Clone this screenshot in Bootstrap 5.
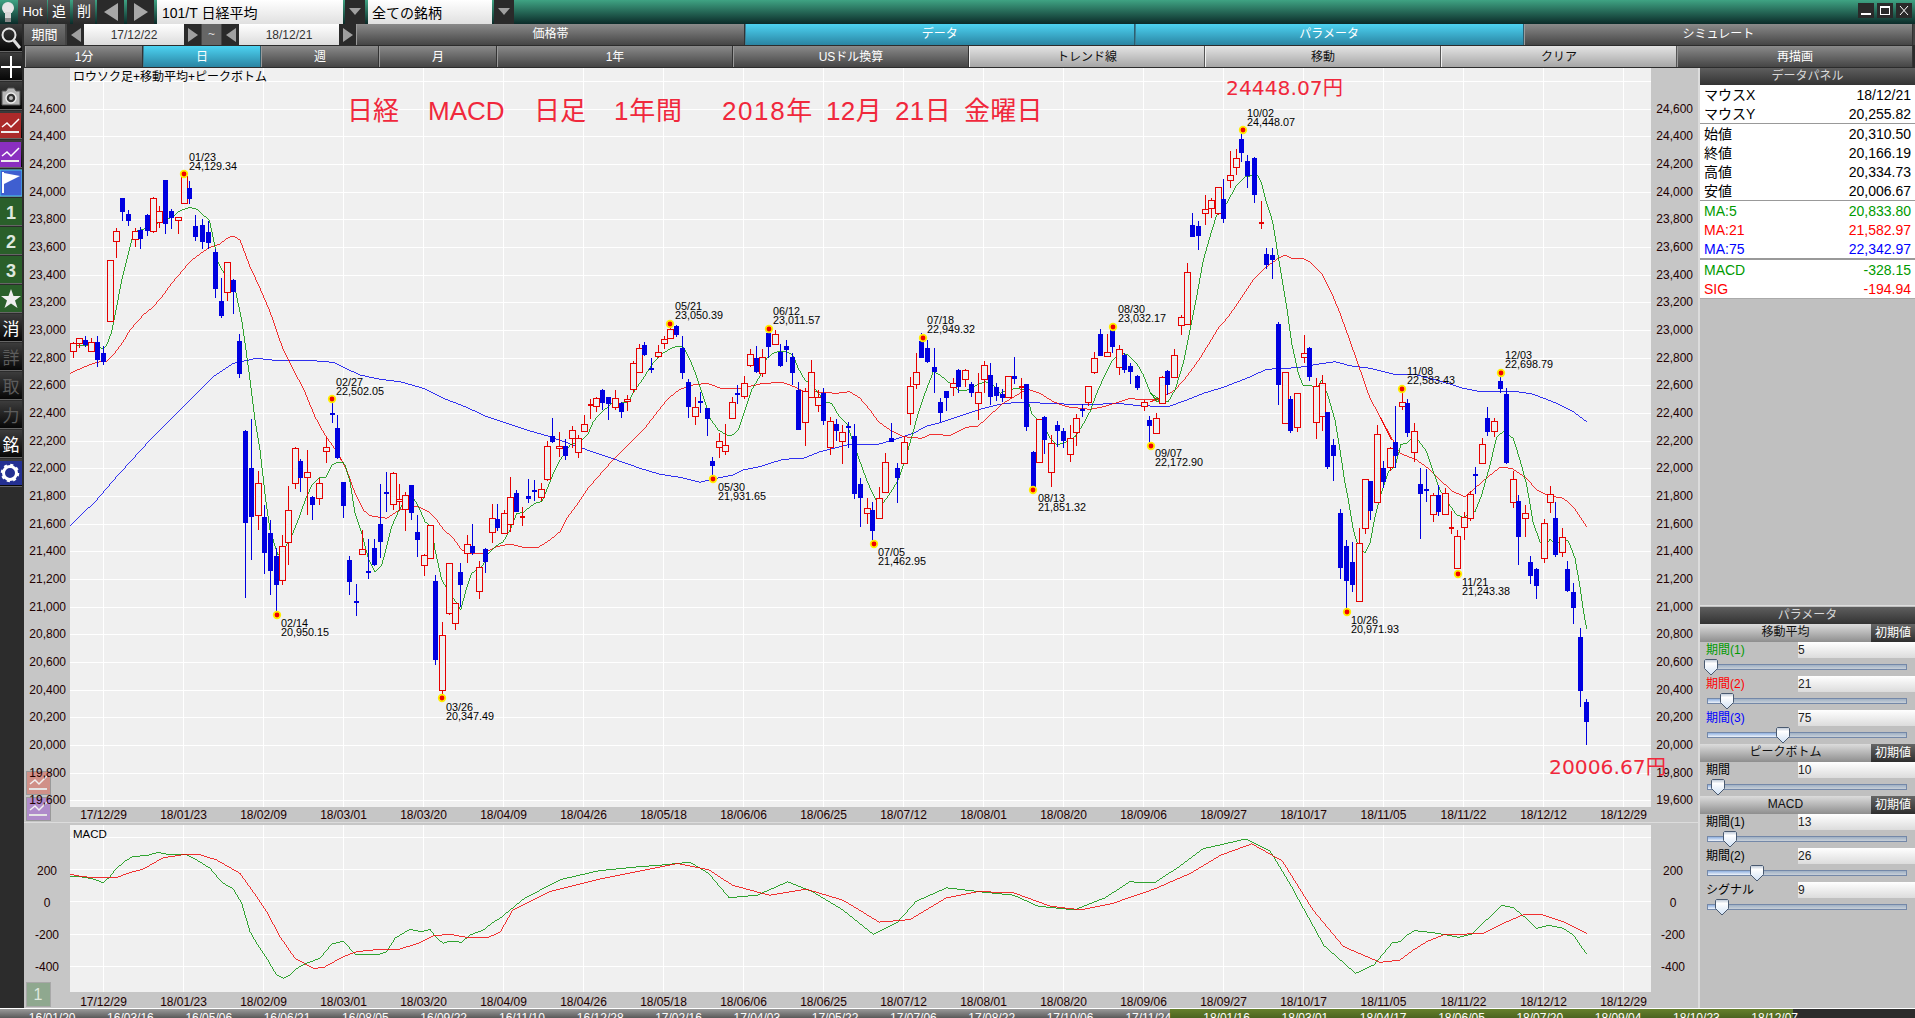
<!DOCTYPE html>
<html lang="ja">
<head>
<meta charset="utf-8">
<title>日経 MACD</title>
<link href="https://cdn.jsdelivr.net/npm/bootstrap@5.3.0/dist/css/bootstrap.min.css" rel="stylesheet">
<style>
html,body{margin:0;width:1915px;height:1018px;overflow:hidden;background:#2c2c2c}
body{font-family:"Liberation Sans","Noto Sans CJK JP",sans-serif;font-size:12px;line-height:1.1;color:#000}
.tbar{height:24px;background:linear-gradient(#3fa383,#0b2b29);flex:none}
.xb{display:flex;align-items:center;justify-content:center;font-size:12px;color:#fff;padding:0;border:0;border-radius:0;background:linear-gradient(#8a8a8a,#454545);box-shadow:inset 1px 0 0 #9a9a9a,inset -1px 0 0 #333;white-space:nowrap}
.xb.on{background:linear-gradient(#4dd3f2,#2a84a2);box-shadow:inset 1px 0 0 #3b7f95,inset -1px 0 0 #2c5f70}
.xb.lite{background:linear-gradient(#e4e4e4,#a6a6a6);color:#111;box-shadow:inset 1px 0 0 #f2f2f2,inset -1px 0 0 #555}
.bulb{width:16px;margin-right:2px}
.t-hot{width:29px;font-size:13px;background:linear-gradient(#555,#2a2a2a);margin-right:1px;box-shadow:none}
.t-k{width:22px;font-size:14px;background:linear-gradient(#555,#2a2a2a);margin-right:3px;box-shadow:none}
.t-k2{margin-right:2px}
.t-arr{width:27px;margin-right:3px;background:#2a2a2a;box-shadow:none}
.t-drop{width:20px;background:#2a2a2a;box-shadow:none}
.inp1{height:24px;border:0;border-radius:0;padding:0 0 0 5px;font-size:14px;background:linear-gradient(#fff,#e0e0e0);color:#000;line-height:22px}
.inp-a{width:186px;margin:0 2px 0 0}
.inp-b{width:124px;margin:0 2px 0 3px;padding-left:4px}
.winb{width:16px;height:15px;background:#2a2a2a;margin:3px 3px 0 0;display:flex;align-items:center;justify-content:center}
.mainrow{height:984px;flex:none}
.sidebar{width:24px;flex:none;background:#2c2c2c}
.sbtn{width:22px;height:28px;margin-bottom:1px;display:flex;align-items:center;justify-content:center;padding:0;border:0;border-radius:0;background:linear-gradient(#3c3c3c,#050505);box-shadow:inset 0 -1px 0 #666}
.sbtn svg{display:block}
.sbtn .kj{font-size:17px;color:#fff;font-family:"Noto Sans CJK JP",sans-serif}
.sbtn .kj.dim{color:#5c5c5c}
.workarea{width:1891px;flex:none}
.row2{height:21px;margin-bottom:1px;flex:none;background:#444}
.row2 .g1{padding-top:1px}
.row3{height:21px;margin:0 2px 1px 1px;flex:none;background:#444}
.row3 .xb{padding-top:2px}
.c-lbl{width:41px;margin-right:2px;background:linear-gradient(#707070,#505050);font-size:13px;box-shadow:none;padding-top:1px}
.c-arr{width:17px;background:#2a2a2a;box-shadow:none}
.c-tilde{width:19px;margin:0 1px;background:#666;box-shadow:none;color:#ddd}
.date-in{width:100px;height:21px;border:0;border-radius:0;padding:1px 0 0;text-align:center;font-size:12px;color:#333;background:linear-gradient(#fff,#dcdcdc)}
.tabs{margin-right:2px}
.g1{flex:1 1 0}
.g2{flex:2 1 0}
.chartarea{height:940px;flex:none}
.chartcol{width:1674px;flex:none;background:#c6c6c6}
.chartcol svg{display:block}
.sepv{width:2px;flex:none;background:#dcdcdc}
.panel{width:215px;flex:none;background:#c0c0c0}
.ph{height:17px;background:linear-gradient(#5e5e5e,#333);color:#d8d8d8;text-align:center;line-height:17px;font-size:12px;flex:none}
.dp{background:#fff;font-size:14px;flex:none;box-shadow:0 1px 0 #aaa}
.dp .ln{height:19px;padding:0 4px;line-height:20px;white-space:nowrap}
.dp .ln.thin{height:20px;border-bottom:1px solid #999}
.dp .ln.thick{height:21px;border-bottom:2px solid #999}
.c-g{color:#009a00}.c-r{color:#f00}.c-b{color:#00f}
.params{margin-top:auto;height:403px;border-top:1px solid #dedede;padding-top:1px}
.sh{height:18px;background:linear-gradient(#dcdcdc,#8e8e8e);text-align:center;font-size:12px;line-height:17px;flex:none;color:#111}
.reset{width:44px;flex:none;background:linear-gradient(#666,#2e2e2e);color:#fff;font-size:12px;padding:0;border:0;border-radius:0}
.pr{height:34px;position:relative;flex:none}
.pr-top{height:16px}
.pl{width:98px;padding-left:6px;font-size:12px;line-height:17px;white-space:nowrap;flex:none}
.pv{flex:1 1 auto;height:16px;border:0;border-radius:0;padding:0;font-size:12px;line-height:16px;background:linear-gradient(#fff,#dcdcdc);color:#222}
.trk{position:absolute;left:7px;top:22px;width:200px;height:6px;border:1px solid #7488a8;background:linear-gradient(#9fb0c4,#c9d0d8)}
.trk-fill{height:100%;background:linear-gradient(#8fb0e0,#f0f4fa)}
.thumb{position:absolute;top:-6px;width:14px;height:17px}
.tline{height:10px;flex:none;position:relative;overflow:hidden;border-top:1px solid #fff;width:1915px}
.seg-a{width:1170px;background:linear-gradient(#9a9a9a,#5a5a5a)}
.seg-b{width:623px;background:linear-gradient(#66802c,#4c6420)}
.seg-c{flex:1 1 auto;background:#2c2c2c}
.tl-labels{position:absolute;left:13px;top:3px;color:#fff;font-size:12px}
.tl-item{width:78.3px;text-align:center;flex:none;border-left:0}
svg text{font-family:"Liberation Sans","Noto Sans CJK JP",sans-serif}
</style>
</head>
<body class="d-flex flex-column">
<header class="tbar d-flex">
  <div class="bulb d-flex justify-content-center"><svg width="14" height="24" viewBox="0 0 14 24"><circle cx="7" cy="8" r="6" fill="#e6e6e6"/><rect x="4" y="12" width="6" height="6" fill="#d8d8d8"/><rect x="4" y="18" width="6" height="4" fill="#888"/></svg></div>
  <button class="xb t-hot">Hot</button>
  <button class="xb t-k">追</button>
  <button class="xb t-k t-k2">削</button>
  <button class="xb t-arr"><svg width="16" height="18" viewBox="0 0 16 18"><polygon points="15,0 15,18 1,9" fill="#a8a8a8"/></svg></button>
  <button class="xb t-arr"><svg width="16" height="18" viewBox="0 0 16 18"><polygon points="1,0 1,18 15,9" fill="#a8a8a8"/></svg></button>
  <input class="form-control inp1 inp-a" value="101/T 日経平均">
  <button class="xb t-drop"><svg width="12" height="8" viewBox="0 0 12 8"><polygon points="0,0 12,0 6,7" fill="#a0a0a0"/></svg></button>
  <input class="form-control inp1 inp-b" value="全ての銘柄">
  <button class="xb t-drop"><svg width="12" height="8" viewBox="0 0 12 8"><polygon points="0,0 12,0 6,7" fill="#a0a0a0"/></svg></button>
  <div class="ms-auto d-flex">
    <div class="winb"><svg width="12" height="11" viewBox="0 0 12 11"><rect x="1" y="8" width="10" height="2" fill="#fff"/></svg></div>
    <div class="winb"><svg width="12" height="11" viewBox="0 0 12 11"><rect x="1.5" y="1.5" width="9" height="8" fill="none" stroke="#fff"/><rect x="1" y="1" width="10" height="2" fill="#fff"/></svg></div>
    <div class="winb"><svg width="12" height="11" viewBox="0 0 12 11"><path d="M2 1 L10 10 M10 1 L2 10" stroke="#fff" fill="none"/></svg></div>
  </div>
</header>

<div class="d-flex mainrow">
  <aside class="sidebar d-flex flex-column">
    <button class="sbtn"><svg width="22" height="28" viewBox="0 0 22 28"><circle cx="9" cy="11" r="6.5" fill="none" stroke="#e4e4e4" stroke-width="2"/><line x1="13.5" y1="16" x2="20" y2="24" stroke="#dcdcdc" stroke-width="3"/></svg></button>
    <button class="sbtn"><svg width="22" height="28" viewBox="0 0 22 28"><path d="M11 3V25M1 14H21" stroke="#fff" stroke-width="2" fill="none"/></svg></button>
    <button class="sbtn"><svg width="22" height="28" viewBox="0 0 22 28"><path d="M2 9H6L8 6H14L16 9H20V23H2Z" fill="#b5b5b5" stroke="#555"/><circle cx="11" cy="16" r="5" fill="#333" stroke="#eee" stroke-width="1.5"/><circle cx="11" cy="16" r="2" fill="#bbb"/></svg></button>
    <button class="sbtn"><svg width="22" height="28" viewBox="0 0 22 28"><rect x="0" y="2" width="21" height="25" fill="#ab2a2a"/><path d="M2 16 L7 12 L11 16 L19 8" stroke="#fff" stroke-width="1.5" fill="none"/><path d="M1 21H19" stroke="#eee" stroke-width="2"/></svg></button>
    <button class="sbtn"><svg width="22" height="28" viewBox="0 0 22 28"><rect x="0" y="2" width="21" height="25" fill="#8a2fc0"/><path d="M2 16 L7 12 L11 16 L19 8" stroke="#fff" stroke-width="1.5" fill="none"/><path d="M1 21H19" stroke="#eee" stroke-width="2"/></svg></button>
    <button class="sbtn"><svg width="22" height="28" viewBox="0 0 22 28"><rect x="0" y="1" width="22" height="26" fill="#3f5fd0" stroke="#48c8e8"/><path d="M3 3V24" stroke="#fff" stroke-width="2"/><path d="M4 4 L20 7 L4 15Z" fill="#fff"/></svg></button>
    <button class="sbtn"><svg width="22" height="28" viewBox="0 0 22 28"><rect width="22" height="27" fill="#2a5f2a"/><text x="11" y="21" text-anchor="middle" font-size="18" font-weight="700" fill="#dfe8df">1</text></svg></button>
    <button class="sbtn"><svg width="22" height="28" viewBox="0 0 22 28"><rect width="22" height="27" fill="#2a5f2a"/><text x="11" y="21" text-anchor="middle" font-size="18" font-weight="700" fill="#dfe8df">2</text></svg></button>
    <button class="sbtn"><svg width="22" height="28" viewBox="0 0 22 28"><rect width="22" height="27" fill="#2a5f2a"/><text x="11" y="21" text-anchor="middle" font-size="18" font-weight="700" fill="#dfe8df">3</text></svg></button>
    <button class="sbtn"><svg width="22" height="28" viewBox="0 0 22 28"><rect width="22" height="27" fill="#2a5f2a"/><polygon points="11,4 13.5,11 21,11 15,15.5 17.5,23 11,18.5 4.5,23 7,15.5 1,11 8.500,11" fill="#eee"/></svg></button>
    <button class="sbtn"><span class="kj">消</span></button>
    <button class="sbtn"><span class="kj dim">詳</span></button>
    <button class="sbtn"><span class="kj dim">取</span></button>
    <button class="sbtn"><span class="kj dim">力</span></button>
    <button class="sbtn"><span class="kj">銘</span></button>
    <button class="sbtn"><svg width="22" height="28" viewBox="0 0 22 28"><rect y="2" width="22" height="24" fill="#243092"/><circle cx="10" cy="14" r="6.5" fill="none" stroke="#fff" stroke-width="3"/><circle cx="10" cy="14" r="8" fill="none" stroke="#fff" stroke-width="2.500" stroke-dasharray="3 3.280"/></svg></button>
  </aside>

  <div class="workarea d-flex flex-column">
    <div class="row2 d-flex">
      <div class="xb c-lbl">期間</div>
      <button class="xb c-arr"><svg width="12" height="14" viewBox="0 0 12 14"><polygon points="11,0 11,14 1,7" fill="#a0a0a0"/></svg></button>
      <input class="form-control date-in" value="17/12/22">
      <button class="xb c-arr"><svg width="12" height="14" viewBox="0 0 12 14"><polygon points="1,0 1,14 11,7" fill="#a0a0a0"/></svg></button>
      <div class="xb c-tilde">~</div>
      <button class="xb c-arr"><svg width="12" height="14" viewBox="0 0 12 14"><polygon points="11,0 11,14 1,7" fill="#a0a0a0"/></svg></button>
      <input class="form-control date-in" value="18/12/21">
      <button class="xb c-arr"><svg width="12" height="14" viewBox="0 0 12 14"><polygon points="1,0 1,14 11,7" fill="#a0a0a0"/></svg></button>
      <div class="d-flex flex-fill tabs">
        <button class="xb g1">価格帯</button>
        <button class="xb g1 on">データ</button>
        <button class="xb g1 on">パラメータ</button>
        <button class="xb g1">シミュレート</button>
      </div>
    </div>
    <div class="row3 d-flex">
      <button class="xb g1">1分</button>
      <button class="xb g1 on">日</button>
      <button class="xb g1">週</button>
      <button class="xb g1">月</button>
      <button class="xb g2">1年</button>
      <button class="xb g2">USドル換算</button>
      <button class="xb g2 lite">トレンド線</button>
      <button class="xb g2 lite">移動</button>
      <button class="xb g2 lite">クリア</button>
      <button class="xb g2">再描画</button>
    </div>
    <div class="d-flex chartarea">
      <div class="chartcol">
        <svg id="sp" width="1674" height="755" viewBox="24 68 1674 755"></svg>
        <svg id="sm" width="1674" height="185" viewBox="24 823 1674 185"></svg>
      </div>
      <div class="sepv"></div>
      <div class="panel d-flex flex-column">
        <div class="ph">データパネル</div>
        <div class="dp">
          <div class="ln d-flex justify-content-between"><span>マウスX</span><span>18/12/21</span></div>
          <div class="ln thin d-flex justify-content-between"><span>マウスY</span><span>20,255.82</span></div>
          <div class="ln d-flex justify-content-between"><span>始値</span><span>20,310.50</span></div>
          <div class="ln d-flex justify-content-between"><span>終値</span><span>20,166.19</span></div>
          <div class="ln d-flex justify-content-between"><span>高値</span><span>20,334.73</span></div>
          <div class="ln thin d-flex justify-content-between"><span>安値</span><span>20,006.67</span></div>
          <div class="ln c-g d-flex justify-content-between"><span>MA:5</span><span>20,833.80</span></div>
          <div class="ln c-r d-flex justify-content-between"><span>MA:21</span><span>21,582.97</span></div>
          <div class="ln thick c-b d-flex justify-content-between"><span>MA:75</span><span>22,342.97</span></div>
          <div class="ln c-g d-flex justify-content-between"><span>MACD</span><span>-328.15</span></div>
          <div class="ln c-r d-flex justify-content-between"><span>SIG</span><span>-194.94</span></div>
        </div>
        <div class="params d-flex flex-column" id="params"></div>
      </div>
    </div>
  </div>
</div>

<footer class="tline d-flex">
  <div class="seg-a"></div><div class="seg-b"></div><div class="seg-c"></div>
  <div class="tl-labels d-flex" id="tl"></div>
</footer>

<script src="https://cdn.jsdelivr.net/npm/bootstrap@5.3.0/dist/js/bootstrap.bundle.min.js"></script>
<script>
// Candles: crop-relative readings  [colour, x, wickTop, bodyTop, bodyBottom, wickBottom]
var C=[];
function add(X,Y,s,l){l.forEach(function(a){C.push([a[0],X+a[1]/s,Y+a[2]/s,Y+a[3]/s,Y+a[4]/s,Y+a[5]/s])})}
add(0,160,3,[['r',219,545,550,572,593],['r',238,533,535,548,565],['b',256,528,540,555,560],['r',274,535,547,572,572],['b',292,528,547,600,620],['b',310,558,580,607,615],['r',330,300,300,482,482],['r',348,205,214,244,294],['b',367,114,114,155,183],['b',385,150,162,183,198],['r',404,205,214,238,260],['b',421,200,210,237,267],['b',440,163,165,212,228],['r',458,110,115,212,218],['r',477,138,152,186,205],['b',496,59,60,192,222],['b',514,148,154,175,207],['r',533,170,172,179,222],['r',552,40,47,128,131],['b',568,63,84,117,132],['b',586,165,198,231,242],['b',606,177,195,246,267],['b',625,183,216,248,267],['b',644,268,276,387,413],['b',662,354,423,468,473],['r',681,305,307,397,422],['b',698,358,361,396,462],['b',716,522,543,641,654]]);
add(0,0,1,[['b',245,430,431,523,598],['b',251,419,468,517,560],['r',258,471,483,515,530],['b',264,505,517,553,574],['b',270,520,533,571,595],['b',276,548,556,585,615],['r',282,535,546,580,585],['r',288,486,510,542,565],['r',295,447,448,483,489],['b',300,459,461,478,492],['r',307,450,472,477,515],['b',312,496,497,505,520],['r',319,478,483,498,505],['r',326,437,447,451,463],['b',332,402,413,415,423],['b',337,415,428,458,459],['r',442,622,635,690,698],['b',435,575,581,660,665]]);
add(340,290,3,[['b',10,576,576,648,684],['b',28,798,810,876,915],['b',47,882,932,932,977],['r',66,720,778,791,795],['b',85,747,843,843,866],['b',103,747,775,826,828],['b',121,582,702,755,804],['b',139,546,607,607,665],['r',159,546,550,643,660],['r',176,582,628,634,662],['r',196,606,616,658,722],['b',214,585,585,668,690],['b',232,675,726,749,800],['r',252,792,794,826,857],['r',270,705,706,805,805],['r',327,820,820,968,975],['r',345,938,938,998,1020],['b',361,820,847,885,950],['r',380,735,763,788,820],['b',397,702,768,790,795],['r',416,812,830,904,928],['b',434,775,778,815,850],['r',456,642,683,727,758],['b',472,642,688,713,722],['r',491,660,670,730,733],['r',510,561,622,703,725],['b',527,600,609,665,666],['r',546,650,677,677,707],['b',565,568,619,627,640],['b',583,570,601,601,632],['r',602,578,598,620,632],['r',621,453,469,568,572],['b',637,384,439,456,460],['r',657,427,469,475,502],['b',675,447,468,498,510],['r',696,408,421,443,473],['r',714,435,445,487,503],['r',732,375,403,422,425],['r',750,327,342,342,387],['r',768,320,325,347,366],['b',785,296,300,338,360],['b',804,321,321,343,390],['r',825,300,325,352,360],['b',842,335,340,365,383],['r',861,315,327,334,363],['r',879,213,220,298,308],['r',897,163,175,245,250],['b',913,155,165,195,198],['b',934,205,233,233,248],['r',954,165,187,197,205],['r',972,138,148,160,176],['r',990,100,118,145,147],['b',1007,105,108,134,140],['b',1025,138,174,248,267],['b',1044,268,277,352,384],['r',1065,322,350,379,405],['b',1081,306,333,333,368],['b',1100,353,355,386,438],['b',1117,500,513,527,566],['r',1137,430,452,470,505],['r',1155,403,466,484,495],['r',1176,322,337,385,388],['b',1192,285,308,308,342],['r',1212,258,278,319,328],['r',1230,178,193,226,232],['b',1247,168,204,245,250]]);
add(750,290,3,[['r',36,177,202,250,260],['b',55,130,130,170,205],['r',75,120,133,163,165],['b',91,163,186,227,230],['b',109,150,168,180,215],['b',127,190,200,250,285],['b',145,277,300,420,420],['r',164,295,303,395,467],['r',184,210,247,320,325],['r',203,300,322,346,365],['b',220,295,309,392,405],['r',239,380,394,470,495],['b',257,388,403,422,452],['r',276,405,425,454,522],['b',295,395,408,408,475],['b',313,403,438,612,628],['b',331,565,582,625,712],['r',350,625,653,670,702],['b',367,635,660,723,760],['r',387,592,625,683,683],['r',405,490,515,605,608],['b',423,400,445,455,455],['b',442,518,535,564,640],['r',462,440,457,520,522],['r',480,262,289,370,405],['r',498,190,247,283,298],['b',514,130,154,204,205],['b',532,150,175,217,220],['b',553,175,231,245,310],['b',571,323,337,368,395],['b',589,305,304,323,362],['r',608,265,280,290,318],['b',625,238,240,290,308],['r',645,238,241,268,290],['b',663,275,281,308,322],['r',684,250,307,340,390],['r',702,213,226,268,308],['b',719,218,255,320,345],['b',737,280,292,317,333],['b',755,298,312,323,335],['r',774,258,259,320,323],['b',793,200,258,266,282],['r',812,263,288,288,328],['b',829,283,283,410,422],['b',848,483,486,592,598],['r',867,388,388,515,515],['b',883,378,380,450,492],['r',903,435,458,545,590],['b',922,392,404,423,470],['b',940,415,424,453,475],['r',960,405,445,491,515],['r',978,372,385,425,468],['b',995,343,358,358,382],['r',1014,288,287,335,348],['r',1033,185,205,247,252],['b',1051,118,133,198,198],['r',1070,132,185,197,198],['b',1087,110,115,172,190],['r',1106,165,176,232,255],['b',1123,190,196,240,250],['b',1141,220,228,245,282],['b',1162,255,259,293,300],['r',1182,330,335,348,362],['b',1198,378,391,407,458],['r',1218,370,383,430,430],['r',1237,258,260,340,340],['b',1252,240,243,285,316]]);
add(1150,100,3,[['r',73,747,766,832,835],['r',92,645,652,675,705],['r',110,490,517,673,675],['b',127,338,375,410,410],['b',145,363,378,407,450],['r',164,285,328,338,375],['r',183,295,301,325,353],['r',204,260,262,340,345],['b',220,238,297,356,368],['r',240,153,226,241,265],['r',258,148,173,202,225],['b',274,100,118,160,185],['b',292,165,184,227,263],['b',312,172,174,285,308],['r',332,303,366,366,387],['b',349,444,462,494,507],['b',367,444,465,480,536],['b',385,665,672,856,914],['r',405,815,817,970,970],['b',421,888,897,992,998],['r',442,878,878,982,995],['r',461,705,758,772,788],['b',478,742,744,830,842]]);
add(1300,400,3,[['r',47,-66,-42,65,118],['r',66,-76,-50,48,92],['b',82,35,37,200,208],['b',100,118,135,167,242],['b',120,328,340,505,537],['b',138,420,438,542,625],['b',157,427,487,556,575],['r',177,385,430,603,605],['r',194,238,238,385,402],['b',211,243,243,332,360],['r',232,75,103,305,305],['b',250,183,205,245,265],['r',269,140,145,200,212],['b',286,18,127,167,205],['r',305,-24,6,18,30],['b',322,-3,9,100,111],['r',342,70,93,155,187],['b',361,205,252,282,418],['b',379,207,268,268,305],['r',398,280,285,343,365],['b',414,255,285,335,347],['r',434,265,280,342,343],['r',453,333,380,380,402],['r',472,390,408,503,505],['r',491,335,352,380,420],['r',510,272,283,353,362],['b',526,200,221,221,282],['r',545,113,133,190,190],['b',562,20,55,95,108],['r',582,55,62,92,110],['b',600,-72,-57,-33,-21],['b',618,-36,-18,188,192],['r',639,212,238,307,325],['b',655,285,303,410,495],['r',675,315,340,355,410],['b',691,468,487,527,552],['b',709,505,507,557,597],['r',731,358,370,475,488],['r',750,258,283,307,340],['b',766,305,355,465,472],['r',785,385,412,457,470],['b',802,483,507,572,577],['b',820,550,576,623,672],['b',840,685,712,873,920],['b',859,897,906,965,1035]]);

function pts(X,Y,s,l){return l.map(function(p){return [X+p[0]/s,Y+p[1]/s]})}
var green=[].concat(
 pts(0,160,3,[[210,572],[219,560],[240,555],[275,555],[292,558],[310,567],[320,555],[335,515],[350,440],[365,360],[380,300],[395,240],[410,212],[440,205],[470,190],[490,183],[515,172],[540,152],[570,142],[590,148],[610,165],[628,180],[640,235],[655,310],[670,335],[690,362],[708,400],[725,480],[745,620],[765,780],[780,870],[797,1020]]),
 [[270,530],[278,555],[285,548],[292,535],[300,515],[306,498],[312,485],[320,477],[326,477],[332,465],[338,462],[343,462]],
 pts(340,290,3,[[15,525],[30,575],[45,670],[65,730],[85,805],[105,845],[125,825],[140,770],[155,710],[175,665],[195,630],[220,622],[240,660],[255,695],[275,710],[285,780],[305,870],[330,910],[350,940],[362,960],[378,900],[395,850],[410,840],[430,825],[445,790],[465,770],[490,755],[510,720],[530,670],[550,668],[570,650],[590,638],[605,635],[620,600],[640,550],[660,510],[690,465],[720,455],[745,430],[760,395],[785,365],[805,350],[820,335],[840,340],[865,335],[885,300],[910,265],[935,225],[960,195],[985,180],[1010,168],[1030,170],[1050,210],[1070,260],[1090,320],[1110,385],[1135,420],[1160,435],[1175,437],[1195,420],[1215,360],[1235,300],[1260,258]]),
 pts(750,290,3,[[50,205],[70,190],[90,183],[110,185],[128,195],[145,235],[165,270],[185,285],[205,310],[225,335],[245,340],[265,375],[290,400],[310,460],[330,515],[350,570],[370,615],[390,650],[410,625],[430,595],[445,570],[465,510],[485,440],[505,370],[525,310],[550,245],[570,255],[600,280],[625,300],[650,300],[680,285],[705,275],[725,280],[750,310],[770,300],[800,295],[825,300],[845,370],[860,385],[880,405],[900,445],[920,465],[945,458],[975,440],[995,410],[1020,365],[1040,310],[1060,265],[1085,215],[1110,188],[1135,195],[1160,220],[1180,255],[1200,305],[1220,335],[1240,335]]),
 pts(1150,100,3,[[0,878],[15,895],[35,905],[55,905],[75,870],[100,790],[120,690],[140,590],[160,480],[180,410],[200,345],[230,310],[260,255],[285,230],[300,228],[320,222],[335,250],[350,310],[368,365],[380,440],[395,530],[410,620],[425,730],[445,820],[460,858],[480,855],[500,868],[515,840],[535,890],[555,960]]),
 pts(1300,400,3,[[105,60],[120,150],[135,250],[145,300],[160,390],[175,440],[195,458],[210,430],[225,350],[245,275],[265,215],[285,200],[303,133],[320,130],[345,108],[380,155],[400,215],[420,270],[445,310],[470,345],[490,352],[525,335],[545,285],[570,195],[590,110],[610,95],[640,115],[660,180],[680,255],[700,370],[720,425],[732,442],[750,418],[770,432],[785,420],[805,422],[825,475],[840,560],[850,630],[860,688]]));
var red=[].concat(
 pts(0,160,3,[[210,640],[255,620],[290,607],[320,603],[340,585],[370,545],[390,510],[430,465],[460,440],[490,405],[515,370],[545,335],[570,305],[600,282],[630,262],[660,252],[680,235],[700,228],[720,240],[750,320],[780,385],[810,455],[850,570],[880,630],[910,685],[945,770],[975,825],[1000,860],[1025,900]]),
 pts(340,290,3,[[0,503],[20,540],[45,610],[70,660],[90,677],[140,685],[170,665],[200,650],[235,650],[265,665],[290,690],[310,718],[340,745],[365,780],[400,792],[430,790],[470,770],[510,762],[550,772],[595,772],[630,750],[660,725],[680,685],[710,645],[740,600],[770,565],[810,520],[850,480],[880,450],[910,420],[945,375],[985,325],[1020,298],[1060,285],[1100,280],[1150,297],[1200,295],[1260,283]]),
 pts(750,290,3,[[30,280],[100,278],[125,287],[160,303],[260,310],[300,305],[330,325],[360,360],[385,395],[420,420],[460,440],[515,445],[545,432],[600,437],[650,412],[685,408],[720,375],[760,340],[810,310],[830,297],[870,310],[910,335],[950,350],[1020,358],[1060,350],[1100,338],[1140,325],[1180,330],[1240,325]]),
 pts(1150,100,3,[[0,905],[40,890],[75,870],[110,830],[150,775],[205,685],[235,650],[270,600],[310,540],[350,500],[385,475],[405,466],[425,475],[460,475],[485,490],[515,520],[545,580],[570,640],[590,695],[620,780],[660,895],[690,950],[725,1020]]),
 pts(1300,400,3,[[240,50],[265,95],[300,160],[350,180],[385,205],[425,245],[460,275],[495,290],[530,260],[565,230],[600,202],[635,205],[680,235],[710,270],[745,287],[790,295],[820,320],[860,380]]));
var blue=[].concat(
 [[70,526]],
 pts(0,160,3,[[290,1020],[350,950],[450,840],[520,770],[580,710],[640,650],[700,610],[770,595],[815,600],[950,603],[1000,607]]),
 pts(340,290,3,[[0,227],[60,255],[120,268],[180,275],[250,295],[310,325],[380,352],[440,380],[500,400],[560,420],[630,440],[700,465],[770,490],[830,510],[900,535],[960,553],[1020,562],[1080,577],[1120,567],[1180,555],[1210,540],[1260,530]]),
 pts(750,290,3,[[60,520],[100,508],[160,505],[210,485],[300,463],[385,463],[430,450],[490,430],[530,408],[570,398],[640,375],[700,355],[750,343],[800,337],[900,340],[1000,345],[1100,340],[1170,347]]),
 pts(1150,100,3,[[0,918],[60,918],[110,900],[160,880],[220,862],[290,835],[350,808],[440,803],[500,793],[555,785],[600,797],[660,805],[730,822],[800,825],[870,843],[940,865],[990,875],[1090,873],[1150,883],[1220,910],[1270,935],[1310,965]]));

var mg=[].concat(
 pts(0,760,3,[[210,350],[240,350],[280,357],[310,368],[330,350],[345,330],[375,303],[400,289],[440,287],[475,277],[510,285],[555,282],[590,300],[630,325],[665,367],[700,387],[725,430],[750,515],[770,550],[800,595],[830,645],[850,655],[870,645],[895,622],[920,610],[960,595],[995,552],[1030,544],[1065,582],[1100,582],[1130,585],[1160,575],[1185,535],[1230,508],[1265,515],[1290,508],[1310,535],[1330,550],[1350,543],[1385,547],[1410,525],[1450,510],[1480,487],[1500,475]]),
 pts(0,0,0.8188,[[430,735],[460,720],[490,713],[520,710],[545,708],[565,706],[580,715],[597,735],[620,733],[645,722],[665,730],[690,745],[715,765],[735,755],[750,738],[775,727],[800,730],[830,733],[850,742],[880,745],[905,735],[925,722],[945,723],[965,710],[985,695],[1020,687],[1040,697],[1060,730],[1085,775],[1110,797],[1125,790],[1140,772]]),
 pts(1400,800,3,[[0,425],[20,405],[45,392],[100,398],[130,403],[175,412],[215,402],[270,350],[305,316],[340,323],[385,360],[410,385],[445,376],[490,385],[520,405],[560,463]]));
var mr=[].concat(
 pts(0,760,3,[[210,343],[250,350],[290,353],[350,352],[400,335],[430,327],[490,293],[550,284],[600,284],[650,300],[720,340],[770,410],[800,455],[840,530],[885,595],[940,625],[970,623],[1030,590],[1070,575],[1120,570],[1200,567],[1260,548],[1300,527],[1350,523],[1400,532],[1465,532],[1500,517]]),
 pts(0,0,0.8188,[[420,745],[450,730],[490,720],[530,712],[555,707],[580,712],[600,725],[630,733],[660,728],[690,737],[720,755],[745,753],[775,735],[800,730],[830,731],[860,742],[885,745],[910,740],[945,728],[975,715],[1000,700],[1025,691],[1050,705],[1075,745],[1100,775],[1130,788]]),
 pts(1400,800,3,[[0,480],[40,450],[80,425],[130,405],[200,402],[250,400],[310,370],[370,344],[430,345],[490,365],[560,400]]));

function py(v){return 745-(v-20000)*0.13833}
function line(p,c){return '<polyline points="'+p.map(function(q){return q[0].toFixed(1)+','+q[1].toFixed(1)}).join(' ')+'" fill="none" stroke="'+c+'" stroke-width=".8" shape-rendering="crispEdges"/>'}
function txt(x,y,s,o){o=o||{};return '<text x="'+x+'" y="'+y+'" font-size="'+(o.fs||12)+'" fill="'+(o.c||'#200')+'"'+(o.a?' text-anchor="'+o.a+'"':'')+(o.ls?' letter-spacing="'+o.ls+'"':'')+(o.f?' style="font-family:'+o.f+'"':'')+'>'+s+'</text>'}
var dates=['17/12/29','18/01/23','18/02/09','18/03/01','18/03/20','18/04/09','18/04/26','18/05/18','18/06/06','18/06/25','18/07/12','18/08/01','18/08/20','18/09/06','18/09/27','18/10/17','18/11/05','18/11/22','18/12/12','18/12/29'];
function icon(y,fill){return '<g opacity=".75"><rect x="26.500" y="'+(y+.5)+'" width="24" height="23" fill="'+fill+'" stroke="#8a8a8a"/><path d="M30 '+(y+13)+' L35 '+(y+9)+' L39 '+(y+13)+' L47 '+(y+5)+'" stroke="#fff" stroke-width="1.500" fill="none"/><path d="M29 '+(y+18)+'H47" stroke="#eee" stroke-width="2"/></g>'}

// price chart
var s='<rect x="70" y="68" width="1581" height="739" fill="#f0f0f0"/>';
var g='';
for(var v=19600;v<=24800;v+=200){var y=Math.round(py(v))+.5;g+='<line x1="70" x2="1651" y1="'+y+'" y2="'+y+'"/>'}
dates.forEach(function(d,i){var x=103.5+80*i;g+='<line x1="'+x+'" x2="'+x+'" y1="68" y2="807"/>'});
s+='<g stroke="#fff" stroke-width="1" shape-rendering="crispEdges">'+g+'</g>';
s+=icon(771,'#d47e74')+icon(797,'#a878cc');
for(v=19600;v<=24600;v+=200){var y2=py(v)+4,lab=(v+'').replace(/(\d\d)(\d{3})/,'$1,$2');s+=txt(66,y2,lab,{a:'end'})+txt(1693,y2,lab,{a:'end'})}
dates.forEach(function(d,i){s+=txt(103.5+80*i,819,d,{a:'middle'})});
s+=line(blue,'#0000f0')+line(red,'#f00000')+line(green,'#009000');
C.forEach(function(k){
 var X=Math.round(k[1]),col=k[0]=='r'?'#e60000':'#0000e0';
 var wt=Math.round(k[2]),wb=Math.round(k[5]);
 s+='<rect x="'+X+'" y="'+wt+'" width="1" height="'+(wb-wt)+'" fill="'+col+'" shape-rendering="crispEdges"/>';
 var bt=Math.round(k[3]),bb=Math.round(k[4]);
 if(bb-bt<2){s+='<rect x="'+(X-2)+'" y="'+bt+'" width="5" height="2" fill="'+col+'" shape-rendering="crispEdges"/>'}
 else if(k[0]=='b'){s+='<rect x="'+(X-2)+'" y="'+bt+'" width="5" height="'+(bb-bt)+'" fill="'+col+'" shape-rendering="crispEdges"/>'}
 else{s+='<rect x="'+(X-2.5)+'" y="'+(bt+.5)+'" width="6" height="'+(bb-bt)+'" fill="#f0f0f0" stroke="'+col+'" stroke-width="1" shape-rendering="crispEdges"/>'}
});
var peaks=[[184,174,189,157,'01/23','24,129.34'],[1243,130,1247,113,'10/02','24,448.07'],[332,399,336,382,'02/27','22,502.05'],[670,324,675,306,'05/21','23,050.39'],[769,329,773,311,'06/12','23,011.57'],[923,338,927,320,'07/18','22,949.32'],[1113,327,1118,309,'08/30','23,032.17'],[1402,389,1407,371,'11/08','22,583.43'],[1501,373,1505,355,'12/03','22,698.79'],[277,615,281,623,'02/14','20,950.15'],[442,698,446,707,'03/26','20,347.49'],[713,479,718,487,'05/30','21,931.65'],[874,544,878,552,'07/05','21,462.95'],[1033,490,1038,498,'08/13','21,851.32'],[1151,446,1155,453,'09/07','22,172.90'],[1347,612,1351,620,'10/26','20,971.93'],[1458,574,1462,582,'11/21','21,243.38']];
peaks.forEach(function(p){s+='<circle cx="'+p[0]+'" cy="'+p[1]+'" r="4.200" fill="#ffee00"/><circle cx="'+p[0]+'" cy="'+p[1]+'" r="2.400" fill="#f00000"/>';s+=txt(p[2],p[3]+4,p[4],{fs:10.8,c:'#000'})+txt(p[2],p[3]+13,p[5],{fs:10.8,c:'#000'})});
s+=txt(73,81,'ロウソク足+移動平均+ピークボトム',{c:'#000'});
var T='#f0283c';
[[347,'日経',0],[428,'MACD',0],[534,'日足',0],[614,'1年間',.8],[722,'2018年',1.6],[826,'12月',.4],[895,'21日',.4],[964,'金曜日',.2]].forEach(function(a){s+=txt(a[0],120,a[1],{fs:26,c:T,ls:a[2]})});
s+=txt(1226,95,'24448.07円',{fs:20.3,c:T,f:"'DejaVu Sans','Noto Sans CJK JP',sans-serif"});
s+=txt(1549,774,'20006.67円',{fs:20.3,c:T,f:"'DejaVu Sans','Noto Sans CJK JP',sans-serif"});
s+='<rect x="24" y="822" width="1674" height="1" fill="#dcdcdc"/>';
document.getElementById('sp').innerHTML=s;

// MACD chart
var m='<rect x="70" y="825" width="1581" height="167" fill="#f0f0f0"/>',g2='';
[837,869,901,934,966].forEach(function(y){g2+='<line x1="70" x2="1651" y1="'+(y+.5)+'" y2="'+(y+.5)+'"/>'});
dates.forEach(function(d,i){var x=103.5+80*i;g2+='<line x1="'+x+'" x2="'+x+'" y1="825" y2="992"/>'});
m+='<g stroke="#fff" stroke-width="1" shape-rendering="crispEdges">'+g2+'</g>';
[['200',875],['0',907],['-200',939],['-400',971]].forEach(function(a){m+=txt(47,a[1],a[0],{a:'middle'})+txt(1673,a[1],a[0],{a:'middle'})});
dates.forEach(function(d,i){m+=txt(103.5+80*i,1006,d,{a:'middle'})});
m+=txt(73,838,'MACD',{fs:11.5,c:'#000'});
m+=line(mg,'#009000')+line(mr,'#f00000');
m+='<rect x="26.500" y="982.500" width="24" height="24" fill="#8fa88f" stroke="#a8a8a8"/>'+txt(38,1000,'1',{fs:16,c:'#dfe8df',a:'middle'});
document.getElementById('sm').innerHTML=m;

// parameter panel
function thumb(){return '<svg class="thumb" style="left:THUMBpx" viewBox="0 0 14 17"><defs><linearGradient id="tg" x1="0" y1="0" x2="0" y2="1"><stop offset="0" stop-color="#b8c4d4"/><stop offset=".25" stop-color="#fff"/><stop offset="1" stop-color="#cfe0f4"/></linearGradient></defs><path d="M1.500 .5H12.500L13.500 1.500V9.500L7 16L.5 9.500V1.500Z" fill="url(#tg)" stroke="#4a5a70"/></svg>'}
function prow(lab,cl,val,cx){var l=cx-1707;return '<div class="pr"><div class="pr-top d-flex"><div class="pl '+cl+'">'+lab+'</div><input class="form-control pv" value="'+val+'"></div><div class="trk"><div class="trk-fill" style="width:'+l+'px"></div>'+thumb().replace('THUMB',(l-8))+'</div></div>'}
function sect(t){return '<div class="sh d-flex"><div class="flex-fill">'+t+'</div><button class="btn reset">初期値</button></div>'}
document.getElementById('params').innerHTML='<div class="ph">パラメータ</div>'
 +sect('移動平均')+prow('期間(1)','c-g','5',1711)+prow('期間(2)','c-r','21',1727)+prow('期間(3)','c-b','75',1783)
 +sect('ピークボトム')+prow('期間','','10',1718)
 +sect('MACD')+prow('期間(1)','','13',1730)+prow('期間(2)','','26',1757)+prow('シグナル','','9',1722);

// timeline
var tl=['16/01/20','16/03/16','16/05/06','16/06/21','16/08/05','16/09/22','16/11/10','16/12/28','17/02/16','17/04/03','17/05/22','17/07/06','17/08/22','17/10/06','17/11/24','18/01/16','18/03/01','18/04/17','18/06/05','18/07/20','18/09/04','18/10/23','18/12/07'];
document.getElementById('tl').innerHTML=tl.map(function(t){return '<div class="tl-item">'+t+'</div>'}).join('');
</script>
</body>
</html>
